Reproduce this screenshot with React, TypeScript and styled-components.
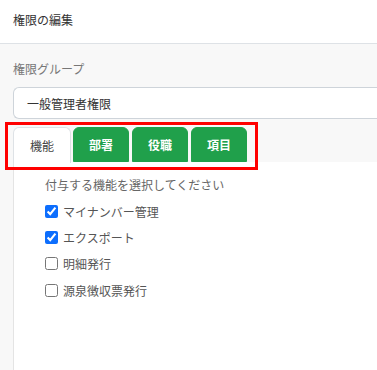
import React, { useState } from 'react';
import styled, { createGlobalStyle } from 'styled-components';

const GlobalStyle = createGlobalStyle`
  html, body {
    margin: 0;
    padding: 0;
    overflow: hidden;
    background: #f8f8f8;
  }
  body {
    font-family: "Noto Sans CJK JP", "Noto Sans", sans-serif;
    font-size: 12px;
    color: #333;
  }
`;

const Page = styled.div`
  height: 370px;
  overflow: hidden;
  background: #f8f8f8;
`;

const Header = styled.div`
  height: 44px;
  padding: 0 13px 5px;
  display: flex;
  align-items: center;
  background: #fff;
  border-bottom: 1px solid #dee2e6;
  color: #333;
  font-size: 12px;
  box-sizing: border-box;
`;

const Body = styled.div`
  padding: 17px 0 0 13px;
`;

const Label = styled.div`
  color: #777;
  font-size: 12px;
  line-height: 16px;
  margin-bottom: 10px;
`;

const Select = styled.div`
  height: 30px;
  display: flex;
  align-items: center;
  padding: 0 13px;
  background: #fff;
  border: 1px solid #ced4da;
  border-right: none;
  border-radius: 6px 0 0 6px;
  color: #333;
`;

const TabArea = styled.div`
  position: relative;
  margin-top: 8px;
`;

const TabNav = styled.div`
  display: flex;
  gap: 2px;
  height: 35px;
`;

const Tab = styled.button<{ $active?: boolean }>`
  font-family: inherit;
  font-size: 12px;
  font-weight: ${p => (p.$active ? 400 : 700)};
  width: ${p => (p.$active ? '58px' : '56px')};
  height: ${p => (p.$active ? '36px' : '35px')};
  margin-right: ${p => (p.$active ? '0' : '1px')};
  padding: 0;
  cursor: pointer;
  color: ${p => (p.$active ? '#444' : '#fff')};
  background: ${p => (p.$active ? '#fff' : '#20a04b')};
  border: 1px solid ${p => (p.$active ? '#dee2e6' : '#20a04b')};
  border-bottom: ${p => (p.$active ? 'none' : '1px solid #20a04b')};
  border-radius: 6px 6px 0 0;
  position: relative;
  z-index: 1;
`;

const Highlight = styled.div`
  position: absolute;
  left: -8px;
  top: -5px;
  width: 247px;
  height: 42px;
  border: 3px solid #ff0000;
  pointer-events: none;
  z-index: 2;
`;

const Panel = styled.div`
  background: #fff;
  border-left: 1px solid #e4e4e4;
  height: 220px;
  padding: 15px 0 0 31px;
`;

const Hint = styled.div`
  color: #666;
  line-height: 16px;
  margin-bottom: 5px;
`;

const CheckRow = styled.label`
  display: flex;
  align-items: center;
  gap: 5px;
  height: 26.3px;
  color: #555;
  cursor: pointer;

  input {
    width: 13px;
    height: 13px;
    margin: 0;
    accent-color: #0d6efd;
  }
`;

const features = [
  { name: 'マイナンバー管理', on: true },
  { name: 'エクスポート', on: true },
  { name: '明細発行', on: false },
  { name: '源泉徴収票発行', on: false },
];

const tabs = ['機能', '部署', '役職', '項目'];

const App: React.FC = () => {
  const [checked, setChecked] = useState(features.map(f => f.on));
  const [active, setActive] = useState(0);

  return (
    <Page>
      <GlobalStyle />
      <Header>権限の編集</Header>
      <Body>
        <Label>権限グループ</Label>
        <Select>一般管理者権限</Select>
        <TabArea>
          <TabNav>
            {tabs.map((t, i) => (
              <Tab key={t} $active={i === active} onClick={() => setActive(i)}>
                {t}
              </Tab>
            ))}
          </TabNav>
          <Highlight />
        </TabArea>
        <Panel>
          <Hint>付与する機能を選択してください</Hint>
          {features.map((f, i) => (
            <CheckRow key={f.name}>
              <input
                type="checkbox"
                checked={checked[i]}
                onChange={() =>
                  setChecked(c => c.map((v, j) => (j === i ? !v : v)))
                }
              />
              {f.name}
            </CheckRow>
          ))}
        </Panel>
      </Body>
    </Page>
  );
};

export default App;
